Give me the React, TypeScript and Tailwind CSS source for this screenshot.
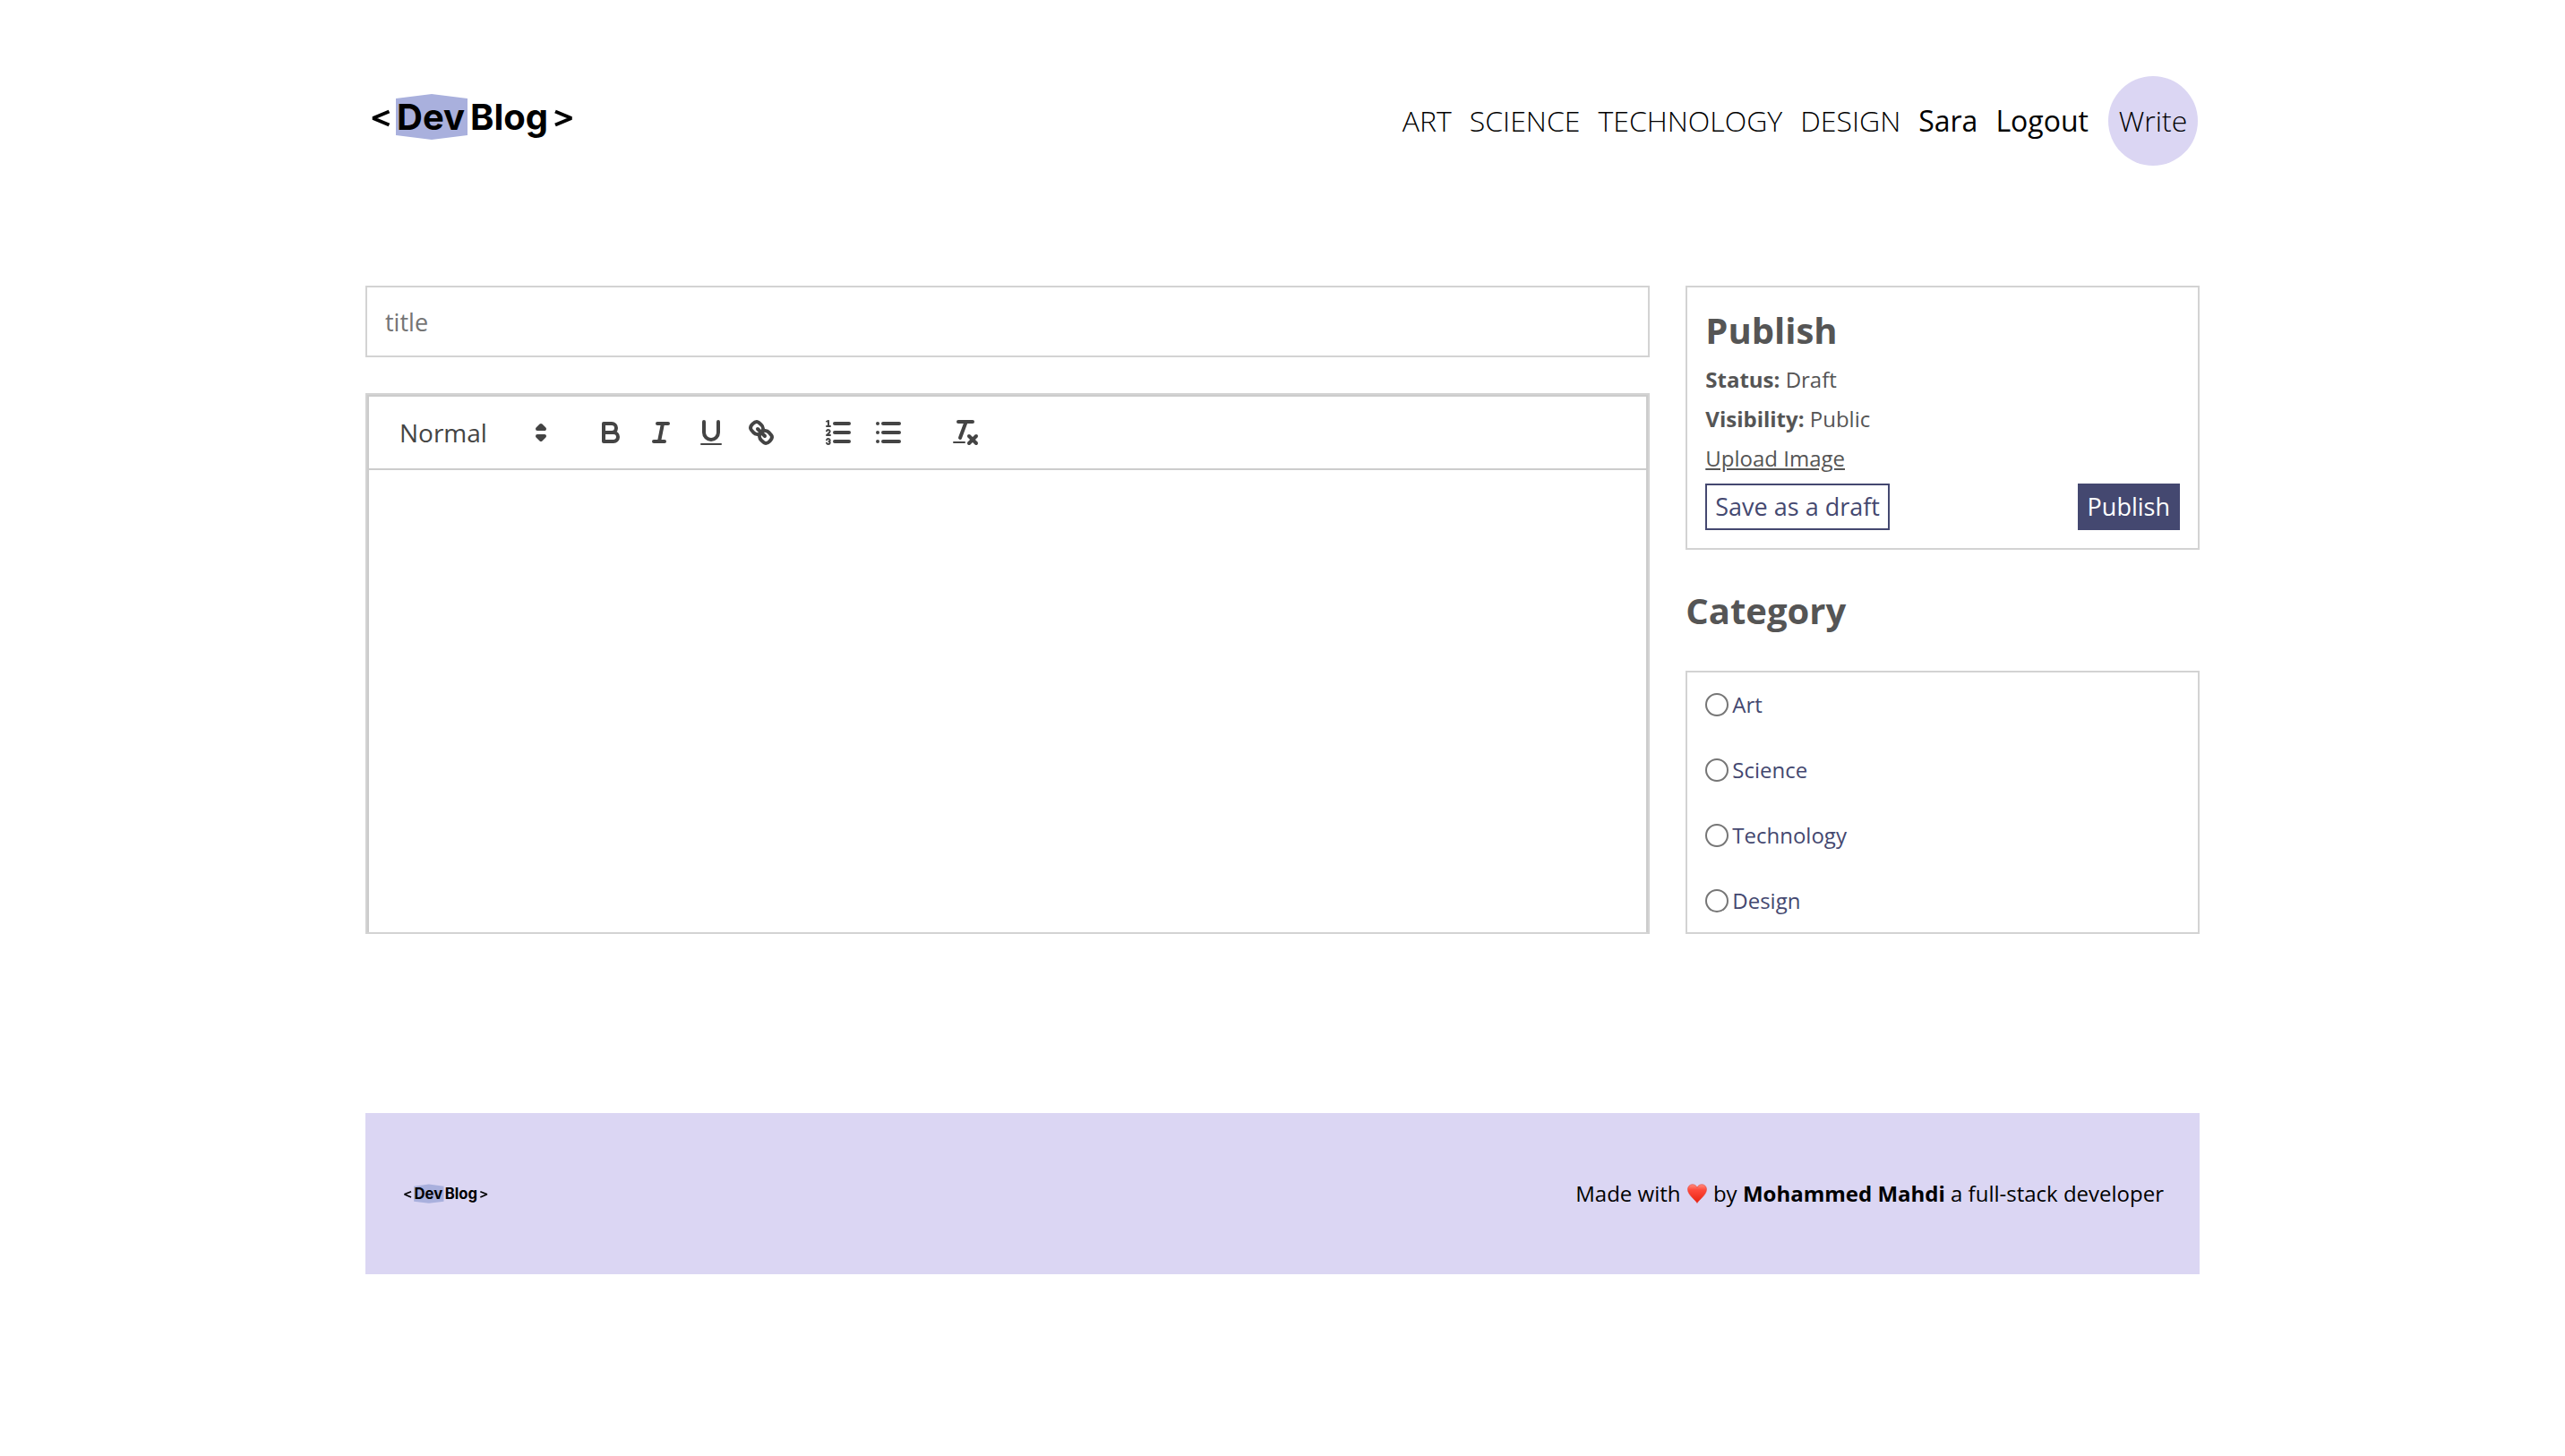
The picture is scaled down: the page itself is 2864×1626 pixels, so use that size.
import type { ReactNode } from "react";

function Logo({ className }: { className: string }) {
  return (
    <svg viewBox="0 0 240 62" className={className} role="img" aria-label="DevBlog">
      <polygon points="34,11 74,6 114,11 114,52 74,57 34,52" fill="#a9b0dd" />
      <g fill="none" stroke="#000" strokeWidth="4" strokeLinejoin="bevel">
        <path d="M26.500 25.500 L8.500 33 L26.500 40.500" />
        <path d="M212 25.500 L230 33 L212 40.500" />
      </g>
      <g fontFamily="Inter, sans-serif" fontWeight="700" fontSize="40" fill="#000">
        <text x="35" y="46">Dev</text>
        <text x="117" y="46">Blog</text>
      </g>
    </svg>
  );
}

function Icon({ children }: { children: ReactNode }) {
  return (
    <svg
      viewBox="0 0 18 18"
      className="size-9"
      fill="none"
      stroke="#444"
      strokeWidth="2"
      strokeLinecap="round"
      strokeLinejoin="round"
      aria-hidden="true"
    >
      {children}
    </svg>
  );
}

function ToolButton({ label, children }: { label: string; children: ReactNode }) {
  return (
    <button type="button" aria-label={label} className="flex h-12 w-14 items-center justify-center">
      <Icon>{children}</Icon>
    </button>
  );
}

function Toolbar() {
  return (
    <div className="flex gap-[30px] border-b-2 border-[#ccc] p-4">
      <div className="relative w-[196px]">
        <select
          aria-label="Text style"
          className="h-12 w-full appearance-none bg-transparent pl-[18px] text-[28px] font-medium text-[#444]"
        >
          <option>Normal</option>
          <option>Heading 1</option>
          <option>Heading 2</option>
        </select>
        <span className="pointer-events-none absolute right-0.5 top-1.5">
          <Icon>
            <polygon points="7 11 9 13 11 11 7 11" />
            <polygon points="7 7 9 5 11 7 7 7" />
          </Icon>
        </span>
      </div>
      <div className="flex">
        <ToolButton label="Bold">
          <path d="M5,4H9.5A2.5,2.5,0,0,1,12,6.5v0A2.5,2.5,0,0,1,9.5,9H5A0,0,0,0,1,5,9V4A0,0,0,0,1,5,4Z" />
          <path d="M5,9h5.5A2.5,2.5,0,0,1,13,11.5v0A2.5,2.5,0,0,1,10.5,14H5a0,0,0,0,1,0,0V9A0,0,0,0,1,5,9Z" />
        </ToolButton>
        <ToolButton label="Italic">
          <line x1="7" x2="13" y1="4" y2="4" />
          <line x1="5" x2="11" y1="14" y2="14" />
          <line x1="8" x2="10" y1="14" y2="4" />
        </ToolButton>
        <ToolButton label="Underline">
          <path d="M5,3V9a4.012,4.012,0,0,0,4,4H9a4.012,4.012,0,0,0,4-4V3" />
          <rect fill="#444" stroke="none" height="1" rx="0.5" width="12" x="3" y="15" />
        </ToolButton>
        <ToolButton label="Link">
          <line x1="7" x2="11" y1="7" y2="11" />
          <path d="M8.9,4.577a3.476,3.476,0,0,1,.36,4.679A3.476,3.476,0,0,1,4.577,8.9C3.185,7.5,2.035,6.4,4.217,4.217S7.5,3.185,8.9,4.577Z" />
          <path d="M13.423,9.1a3.476,3.476,0,0,0-4.679-.36,3.476,3.476,0,0,0,.36,4.679c1.392,1.392,2.5,2.542,4.679.36S14.815,10.5,13.423,9.1Z" />
        </ToolButton>
      </div>
      <div className="flex">
        <ToolButton label="Numbered list">
          <line x1="7" x2="15" y1="4" y2="4" />
          <line x1="7" x2="15" y1="9" y2="9" />
          <line x1="7" x2="15" y1="14" y2="14" />
          <g strokeWidth="1">
            <line x1="2.5" x2="4.5" y1="5.5" y2="5.5" />
            <path
              fill="#444"
              stroke="none"
              d="M3.5,6A0.5,0.5,0,0,1,3,5.5V3.085l-0.276.138A0.5,0.5,0,0,1,2.053,3c-0.124-.247-0.023-0.324.224-0.447l1-.5A0.5,0.5,0,0,1,4,2.5v3A0.5,0.5,0,0,1,3.5,6Z"
            />
            <path d="M4.5,10.5h-2c0-.234,1.85-1.076,1.85-2.234A0.959,0.959,0,0,0,2.5,8.156" />
            <path d="M2.5,14.846a0.959,0.959,0,0,0,1.85-.109A0.7,0.7,0,0,0,3.75,14a0.688,0.688,0,0,0,.6-0.736,0.959,0.959,0,0,0-1.85-.109" />
          </g>
        </ToolButton>
        <ToolButton label="Bulleted list">
          <line x1="6" x2="15" y1="4" y2="4" />
          <line x1="6" x2="15" y1="9" y2="9" />
          <line x1="6" x2="15" y1="14" y2="14" />
          <line x1="3" x2="3" y1="4" y2="4" />
          <line x1="3" x2="3" y1="9" y2="9" />
          <line x1="3" x2="3" y1="14" y2="14" />
        </ToolButton>
      </div>
      <ToolButton label="Clear formatting">
        <line x1="5" x2="13" y1="3" y2="3" />
        <line x1="6" x2="9.35" y1="12" y2="3" />
        <line x1="11" x2="15" y1="11" y2="15" />
        <line x1="15" x2="11" y1="11" y2="15" />
        <rect fill="#444" stroke="none" height="1" rx="0.5" width="7" x="2" y="14" />
      </ToolButton>
    </div>
  );
}

function Heart() {
  return (
    <svg viewBox="0 0 22 22" className="mx-px inline-block size-[22px] align-[-2px]" role="img" aria-label="love">
      <defs>
        <linearGradient id="heart" x1="0" y1="0" x2="0" y2="1">
          <stop offset="0" stopColor="#ff8d80" />
          <stop offset="0.3" stopColor="#ff4a3c" />
          <stop offset="1" stopColor="#e8210f" />
        </linearGradient>
      </defs>
      <path
        d="M11 21.500C9 18 0.500 12.500 0.500 6.300C0.500 2.800 3 0.700 5.800 0.700C8.200 0.700 10.200 2 11 4.300C11.800 2 13.800 0.700 16.200 0.700C19 0.700 21.500 2.800 21.500 6.300C21.500 12.500 13 18 11 21.500Z"
        fill="url(#heart)"
        stroke="#e0392b"
        strokeWidth="0.500"
      />
    </svg>
  );
}

const topics = ["ART", "SCIENCE", "TECHNOLOGY", "DESIGN"];
const categories = ["Art", "Science", "Technology", "Design"];

export default function App() {
  return (
    <div className="flex justify-center font-['Open_Sans','Noto_Sans',sans-serif] text-black">
      <div className="w-full max-w-[2048px]">
        <header className="flex items-start justify-between pt-[85px]">
          <a href="#home" className="mt-3.5 block">
            <Logo className="h-[62px] w-[240px]" />
          </a>
          <nav className="flex items-center gap-5 px-0.5 text-[32px]">
            {topics.map((t) => (
              <a key={t} href={"#" + t.toLowerCase()} className="font-light">
                {t}
              </a>
            ))}
            <span className="font-medium">Sara</span>
            <button type="button" className="font-medium">
              Logout
            </button>
            <a
              href="#write"
              className="ml-0.5 flex size-[100px] items-center justify-center rounded-full bg-[#dbd6f3] font-light"
            >
              Write
            </a>
          </nav>
        </header>

        <main className="mt-[134px] flex gap-10">
          <div className="flex flex-5 flex-col gap-10">
            <input
              type="text"
              placeholder="title"
              aria-label="title"
              className="h-20 border-2 border-[#d3d3d3] px-5 text-[27px] placeholder:text-[#757575]"
            />
            <div className="flex flex-1 flex-col border-2 border-[#d3d3d3]">
              <div className="flex flex-1 flex-col border-2 border-b-0 border-[#ccc]">
                <Toolbar />
                <div
                  contentEditable
                  suppressContentEditableWarning
                  role="textbox"
                  aria-label="Article"
                  className="flex-1 px-[30px] py-6 text-[26px]"
                />
              </div>
            </div>
          </div>

          <aside className="flex flex-2 flex-col text-[#555]">
            <section className="flex flex-col items-start border-2 border-[#d3d3d3] p-5 text-[24px] leading-11">
              <h1 className="mb-1.5 text-[40px] font-bold leading-[55px]">Publish</h1>
              <span>
                <b>Status:</b> Draft
              </span>
              <span>
                <b>Visibility:</b> Public
              </span>
              <a href="#upload" className="underline">
                Upload Image
              </a>
              <div className="mt-1.5 flex w-full justify-between text-[27px] leading-12">
                <button type="button" className="border-2 border-[#444870] px-[9px] text-[#444870]">
                  Save as a draft
                </button>
                <button type="button" className="border-2 border-[#444870] bg-[#444870] px-[9px] text-white">
                  Publish
                </button>
              </div>
            </section>
            <h1 className="my-10 text-[40px] font-bold leading-[55px]">Category</h1>
            <section className="flex flex-col gap-[42px] border-2 border-[#d3d3d3] p-5 text-[24px] leading-[31px] text-[#444870]">
              {categories.map((c) => (
                <label key={c} className="flex items-center gap-1">
                  <input
                    type="radio"
                    name="category"
                    value={c}
                    className="size-[26px] appearance-none rounded-full border-2 border-[#767676] checked:border-8 checked:border-[#444870]"
                  />
                  {c}
                </label>
              ))}
            </section>
          </aside>
        </main>

        <footer className="mt-[200px] flex h-[180px] items-center justify-between bg-[#dbd6f3] px-10 text-[24px]">
          <a href="#home" className="block">
            <Logo className="h-[26px] w-[100px]" />
          </a>
          <p>
            Made with <Heart /> by <b>Mohammed Mahdi</b> a full-stack developer
          </p>
        </footer>
      </div>
    </div>
  );
}
